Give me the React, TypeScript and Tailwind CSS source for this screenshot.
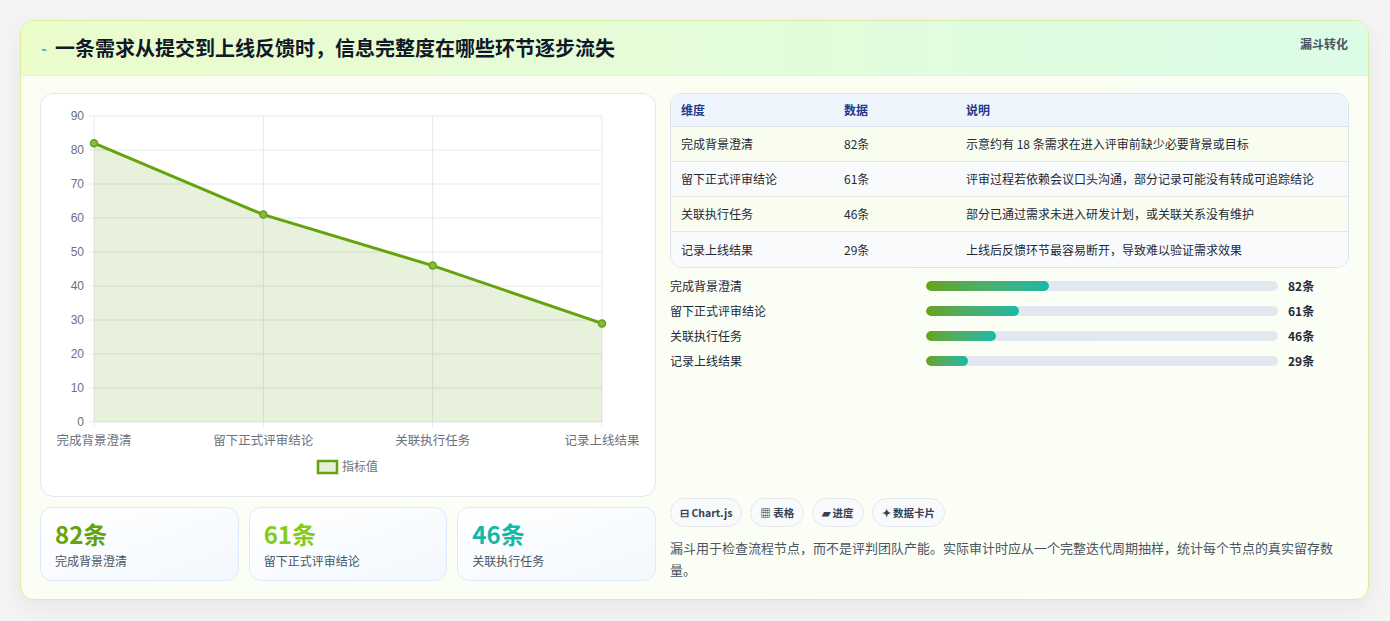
import React from "react";

const rows = [
  ["完成背景澄清", 82, "示意约有 18 条需求在进入评审前缺少必要背景或目标"],
  ["留下正式评审结论", 61, "评审过程若依赖会议口头沟通，部分记录可能没有转成可追踪结论"],
  ["关联执行任务", 46, "部分已通过需求未进入研发计划，或关联关系没有维护"],
  ["记录上线结果", 29, "上线后反馈环节最容易断开，导致难以验证需求效果"],
] as const;

function Chart() {
  const x0 = 53, x1 = 561, yTop = 22, yBot = 328;
  const xs = [0, 1, 2, 3].map((i) => x0 + ((x1 - x0) * i) / 3);
  const y = (v: number) => yBot - ((yBot - yTop) * v) / 90;
  const pts = rows.map((r, i) => [xs[i], y(r[1])]);
  const line = pts.map((p) => p.join(",")).join(" ");
  return (
    <svg width="615" height="403" className="block" style={{ fontFamily: "'Liberation Sans','Noto Sans CJK SC',sans-serif" }}>
      {[0, 10, 20, 30, 40, 50, 60, 70, 80, 90].map((v) => (
        <g key={v}>
          <line x1={x0 - 5} x2={x1} y1={y(v)} y2={y(v)} stroke="#e5e7eb" />
          <text x={x0 - 10} y={y(v) + 4} textAnchor="end" fontSize="12" fill="#6b7280">{v}</text>
        </g>
      ))}
      {xs.map((x, i) => (
        <line key={i} x1={x} x2={x} y1={yTop} y2={yBot + 5} stroke="#e5e7eb" />
      ))}
      <polygon points={`${x0},${yBot} ${line} ${x1},${yBot}`} fill="#65a30d" fillOpacity="0.15" />
      <polyline points={line} fill="none" stroke="#65a30d" strokeWidth="3" />
      {pts.map((p, i) => (
        <circle key={i} cx={p[0]} cy={p[1]} r="3.5" fill="#86b84a" stroke="#65a30d" strokeWidth="1.5" />
      ))}
      {rows.map((r, i) => (
        <text key={i} x={xs[i]} y={351} textAnchor="middle" fontSize="12.5" fill="#6b7280">{r[0]}</text>
      ))}
      <rect x="277" y="367" width="19" height="12" fill="#e6f0d6" stroke="#65a30d" strokeWidth="2.5" />
      <text x="301" y="377" fontSize="12" fill="#6b7280">指标值</text>
    </svg>
  );
}

export default function App() {
  const colors = ["text-[#65a30d]", "text-[#84cc16]", "text-[#14b8a6]"];
  const pct = [35, 26.5, 20, 12];
  return (
    <div className="w-[1390px] h-[621px] bg-[#f4f4f5] pt-5 px-5" style={{ fontFamily: "'Noto Sans CJK SC','Noto Sans',sans-serif" }}>
      <div className="w-[1349px] h-[580px] rounded-[14px] border border-[#d9ef9f] overflow-hidden bg-gradient-to-br from-[#fbfdf3] to-[#fcfff5] shadow-[0_8px_24px_rgba(0,0,0,0.06)]">
        <div className="h-[55px] flex items-center justify-between px-5 border-b border-[#e5f2d0] bg-gradient-to-r from-[#ecfccb] to-[#dcfce7]">
          <div className="flex items-center gap-2">
            <span className="text-[10px] text-[#3b82f6]">⌁</span>
            <span className="text-[20px] font-bold text-[#111827]">一条需求从提交到上线反馈时，信息完整度在哪些环节逐步流失</span>
          </div>
          <span className="text-[12px] font-bold text-[#4b5563] self-start mt-[14px]">漏斗转化</span>
        </div>
        <div className="flex gap-[14px] px-[19px] pt-[17px]">
          <div className="w-[616px] flex flex-col gap-[10px]">
            <div className="h-[404px] rounded-[14px] border border-[#e5e7eb] bg-white">
              <Chart />
            </div>
            <div className="grid grid-cols-3 gap-[10px]">
              {rows.slice(0, 3).map((r, i) => (
                <div key={i} className="h-[74px] rounded-[12px] border border-[#dbeafe] bg-gradient-to-br from-white to-[#f3f8fd] px-[14px] pt-[10px]">
                  <div className={`text-[24px] font-bold leading-[32px] ${colors[i]}`}>{r[1]}条</div>
                  <div className="text-[12px] text-[#4b5563] mt-[2px]">{r[0]}</div>
                </div>
              ))}
            </div>
          </div>
          <div className="flex-1 flex flex-col">
            <div className="rounded-[12px] border border-[#dbe3ec] overflow-hidden text-[12px]">
              <div className="flex h-[33px] items-center bg-[#eef5fd] border-b border-[#dbe3ec] font-bold text-[#1e3a8a]">
                <div className="w-[173px] pl-[10px]">维度</div>
                <div className="w-[122px]">数据</div>
                <div>说明</div>
              </div>
              {rows.map((r, i) => (
                <div key={i} className={`flex h-[35px] items-center text-[#1f2937] ${i < 3 ? "border-b border-[#e5e7eb]" : ""} ${i % 2 === 0 ? "bg-[#f9fdef]" : "bg-[#f8fafc]"}`}>
                  <div className="w-[173px] pl-[10px]">{r[0]}</div>
                  <div className="w-[122px]">{r[1]}条</div>
                  <div>{r[2]}</div>
                </div>
              ))}
            </div>
            <div className="mt-[10px] flex flex-col gap-[9px]">
              {rows.map((r, i) => (
                <div key={i} className="flex items-center h-[16px] text-[12px]">
                  <div className="w-[256px] text-[#1f2937]">{r[0]}</div>
                  <div className="w-[352px] h-[10px] rounded-full bg-[#e2e8f0] overflow-hidden">
                    <div className="h-full rounded-full bg-gradient-to-r from-[#65a30d] to-[#14b8a6]" style={{ width: `${pct[i]}%` }} />
                  </div>
                  <div className="ml-[10px] font-bold text-[#1f2937]">{r[1]}条</div>
                </div>
              ))}
            </div>
            <div className="mt-auto">
              <div className="flex gap-2">
                {["⊟ Chart.js", "▦ 表格", "▰ 进度", "✦ 数据卡片"].map((t) => (
                  <span key={t} className="h-[29px] px-[9px] flex items-center rounded-full border border-[#e5e7eb] bg-[#f8fafc] text-[10.5px] font-bold text-[#374151]">{t}</span>
                ))}
              </div>
              <p className="mt-[10px] text-[13px] leading-[22px] text-[#4b5563] pr-[14px]">漏斗用于检查流程节点，而不是评判团队产能。实际审计时应从一个完整迭代周期抽样，统计每个节点的真实留存数量。</p>
            </div>
          </div>
        </div>
      </div>
    </div>
  );
}
